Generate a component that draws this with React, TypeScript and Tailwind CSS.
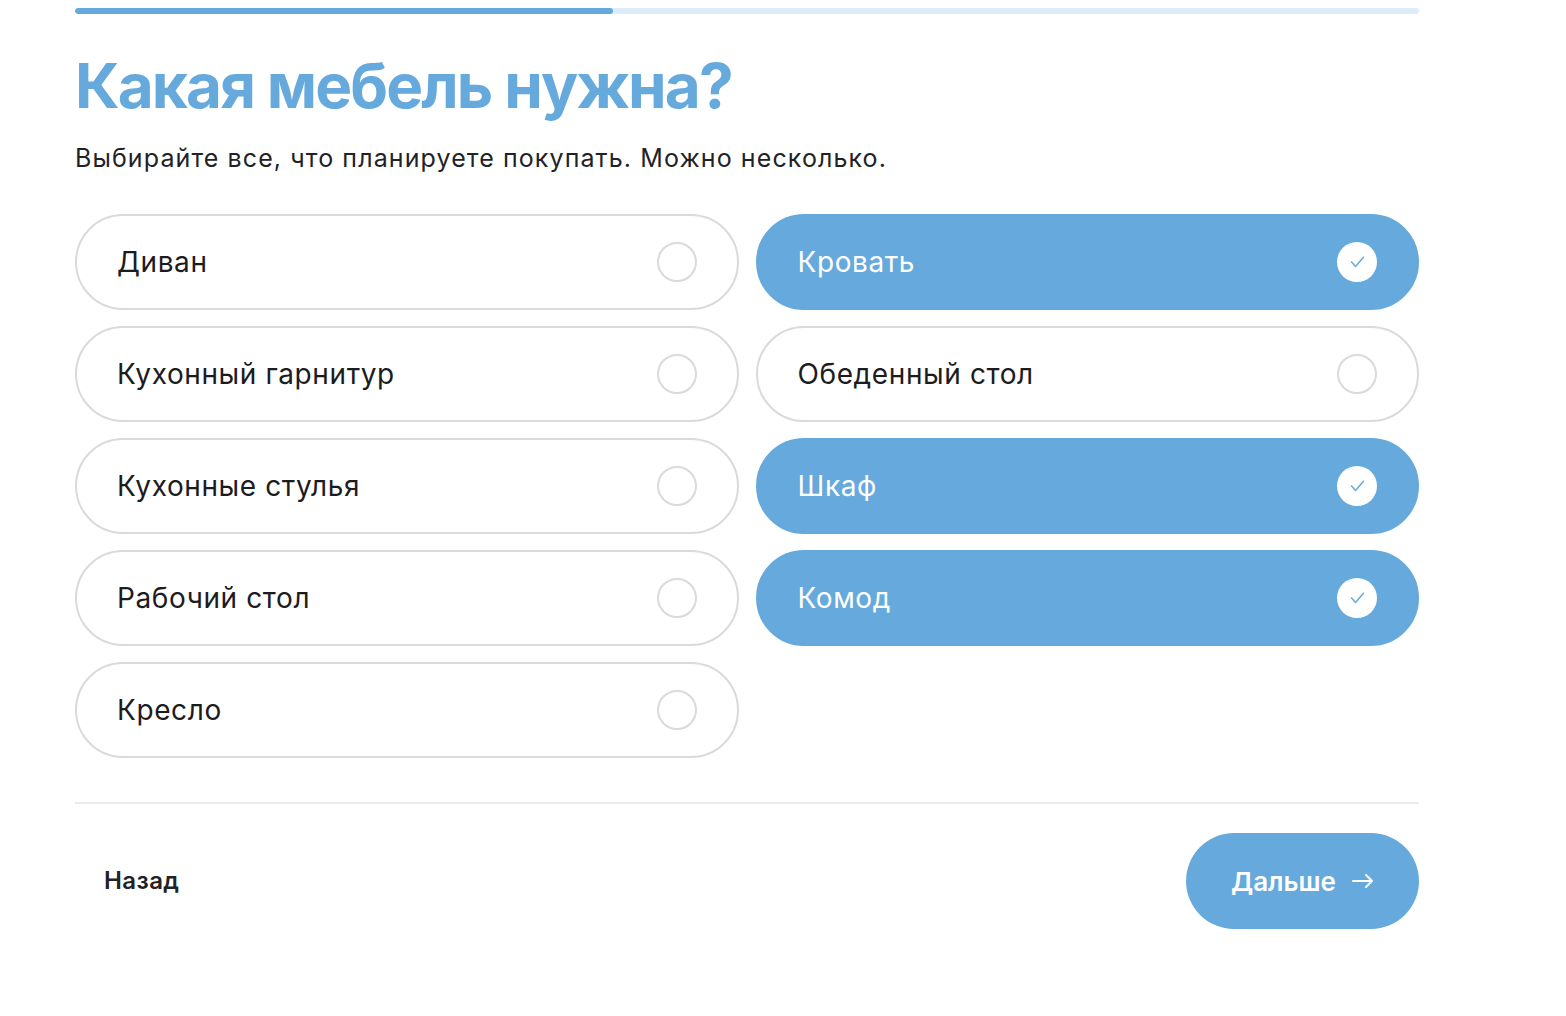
import { useState } from "react";

const ITEMS = [
  "Диван",
  "Кровать",
  "Кухонный гарнитур",
  "Обеденный стол",
  "Кухонные стулья",
  "Шкаф",
  "Рабочий стол",
  "Комод",
  "Кресло",
];

function Option({ label, checked, onToggle }: { label: string; checked: boolean; onToggle: () => void }) {
  return (
    <button
      onClick={onToggle}
      className={
        checked
          ? "h-[96px] rounded-full border-2 border-[#66a9dc] bg-[#66a9dc] pl-[40px] pr-[40px] flex items-center justify-between text-white"
          : "h-[96px] rounded-full border-2 border-[#dadada] bg-white pl-[40px] pr-[40px] flex items-center justify-between text-[#1c1c1e]"
      }
    >
      <span className="text-[28px] tracking-[0.6px]">{label}</span>
      {checked ? (
        <span className="w-[40px] h-[40px] rounded-full bg-white flex items-center justify-center">
          <svg width="15" height="12" viewBox="0 0 15 12" fill="none">
            <path d="M1.5 6l4 4.5L13.5 1.2" stroke="#66a9dc" strokeWidth="1.5" strokeLinecap="round" strokeLinejoin="round" />
          </svg>
        </span>
      ) : (
        <span className="w-[40px] h-[40px] rounded-full border-2 border-[#dadada]" />
      )}
    </button>
  );
}

export default function App() {
  const [selected, setSelected] = useState<string[]>(["Кровать", "Шкаф", "Комод"]);
  const toggle = (s: string) =>
    setSelected((prev) => (prev.includes(s) ? prev.filter((x) => x !== s) : [...prev, s]));

  return (
    <div className="min-h-screen bg-white font-['Inter',sans-serif]">
      <div className="w-[1344px] ml-[75px] pt-[8px]">
        <div className="h-[6px] rounded-full bg-[#ddecf8] overflow-hidden">
          <div className="h-full w-[40%] rounded-full bg-[#66a9dc]" />
        </div>

        <h1 className="mt-[36px] text-[62px] leading-[72px] font-bold text-[#66a9dc] tracking-[-1.9px]">
          Какая мебель нужна?
        </h1>
        <p className="mt-[20px] text-[25px] leading-[32px] text-[#222226] tracking-[1.1px]">
          Выбирайте все, что планируете покупать. Можно несколько.
        </p>

        <div className="mt-[40px] grid grid-cols-2 gap-x-[17px] gap-y-[16px]">
          {ITEMS.map((it) => (
            <Option key={it} label={it} checked={selected.includes(it)} onToggle={() => toggle(it)} />
          ))}
        </div>

        <div className="mt-[44px] h-[2px] bg-[#ebebeb]" />

        <div className="mt-[29px] flex items-center justify-between">
          <button className="ml-[29px] text-[24px] font-semibold text-[#222226] tracking-[0.4px]">Назад</button>
          <button className="h-[96px] w-[233px] rounded-full bg-[#66a9dc] text-white text-[26px] font-semibold flex items-center justify-center gap-[16px]">
            Дальше
            <svg width="22" height="14" viewBox="0 0 22 14" fill="none">
              <path d="M1 7h19M14 1l6 6-6 6" stroke="white" strokeWidth="2" strokeLinecap="round" strokeLinejoin="round" />
            </svg>
          </button>
        </div>
      </div>
    </div>
  );
}
